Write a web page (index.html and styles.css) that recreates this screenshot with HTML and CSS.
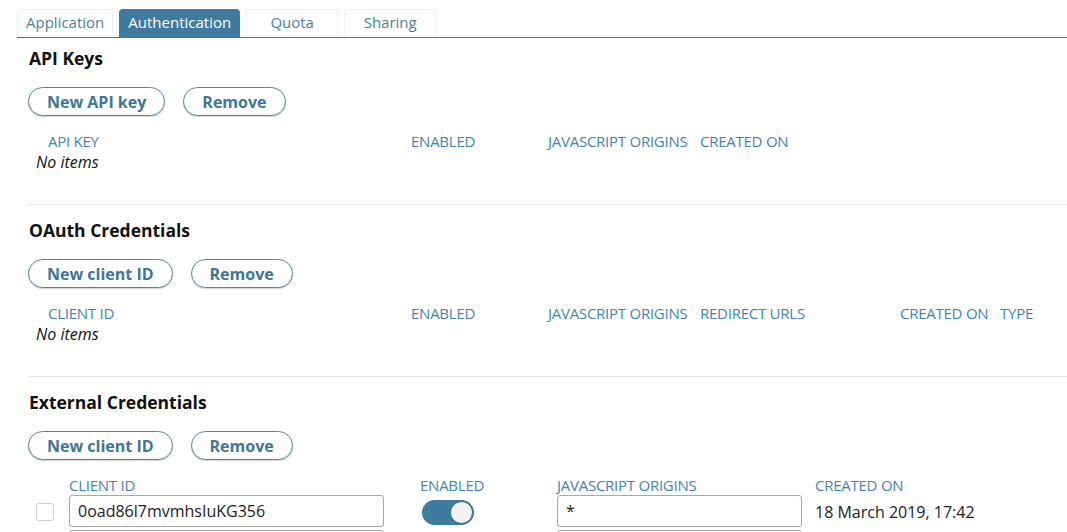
FILE: index.html
```html
<!DOCTYPE html>
<html>
<head>
<meta charset="utf-8">
<link rel="stylesheet" href="styles.css">
</head>
<body>
<div class="page">
  <nav class="tabs">
    <div class="tab">Application</div>
    <div class="tab active">Authentication</div>
    <div class="tab">Quota</div>
    <div class="tab">Sharing</div>
  </nav>

  <section class="section first">
    <h2 class="title">API Keys</h2>
    <div class="actions">
      <button class="pill">New API key</button>
      <button class="pill">Remove</button>
    </div>
    <div class="grid grid-api">
      <div class="th">API KEY</div>
      <div class="th">ENABLED</div>
      <div class="th">JAVASCRIPT ORIGINS</div>
      <div class="th">CREATED ON</div>
    </div>
    <div class="empty">No items</div>
  </section>

  <section class="section">
    <h2 class="title">OAuth Credentials</h2>
    <div class="actions">
      <button class="pill">New client ID</button>
      <button class="pill">Remove</button>
    </div>
    <div class="grid grid-oauth">
      <div class="th">CLIENT ID</div>
      <div class="th">ENABLED</div>
      <div class="th">JAVASCRIPT ORIGINS</div>
      <div class="th">REDIRECT URLS</div>
      <div class="th">CREATED ON</div>
      <div class="th">TYPE</div>
    </div>
    <div class="empty">No items</div>
  </section>

  <section class="section last">
    <h2 class="title">External Credentials</h2>
    <div class="actions">
      <button class="pill">New client ID</button>
      <button class="pill">Remove</button>
    </div>
    <div class="grid grid-ext">
      <div class="th"></div>
      <div class="th">CLIENT ID</div>
      <div class="th">ENABLED</div>
      <div class="th">JAVASCRIPT ORIGINS</div>
      <div class="th">CREATED ON</div>

      <div class="td"><span class="check"></span></div>
      <div class="td"><input class="field wide" value="0oad86l7mvmhsIuKG356"></div>
      <div class="td"><span class="toggle"><span class="knob"></span></span></div>
      <div class="td"><input class="field origin" value="*"></div>
      <div class="td text">18 March 2019, 17:42</div>

      <div class="td"></div>
      <div class="td"><input class="field wide" value=""></div>
      <div class="td"></div>
      <div class="td"><input class="field origin" value=""></div>
      <div class="td"></div>
    </div>
  </section>
</div>
</body>
</html>
```

FILE: styles.css
```css
* { box-sizing: border-box; }
html, body { margin: 0; padding: 0; background: #fff; }
body {
  font-family: "Open Sans", "Liberation Sans", sans-serif;
  color: #222;
  overflow: hidden;
  height: 532px;
}
.page { padding: 9px 0 0 17px; height: 532px; overflow: hidden; }

.tabs {
  display: flex;
  gap: 6px;
  border-bottom: 1px solid #3f7b9e;
  height: 29px;
}
.tab {
  min-width: 92px;
  height: 28px;
  padding: 0 8px;
  border: 1px solid #f0f0f0;
  border-bottom: none;
  border-radius: 4px 4px 0 0;
  font-size: 15px;
  line-height: 25px;
  text-align: center;
  color: #4a7fa3;
}
.tab.active {
  background: #3f7b9e;
  border-color: #3f7b9e;
  color: #fff;
}

.section {
  margin-left: 11px;
  padding-top: 13px;
  padding-bottom: 31px;
  border-bottom: 1px solid #e8e8e8;
}
.section.first { padding-top: 8px; }
.section.last { border-bottom: none; }

.title {
  margin: 0 0 0 1px;
  font-size: 17.5px;
  font-weight: 700;
  line-height: 24px;
  color: #111;
}

.actions {
  display: flex;
  gap: 18px;
  margin-top: 17px;
}
.pill {
  height: 29px;
  padding: 0 18px;
  border: 1px solid #55869f;
  border-radius: 15px;
  background: #fff;
  font-family: "Open Sans", "Liberation Sans", sans-serif;
  font-size: 16px;
  font-weight: 700;
  color: #3f7696;
  box-shadow: 0 1px 1px rgba(0,0,0,0.18);
}

.grid {
  display: grid;
  margin-top: 15px;
  margin-left: 8px;
}
.grid-api { grid-template-columns: 363px 137px 152px 1fr; }
.grid-oauth { grid-template-columns: 363px 137px 152px 200px 100px 1fr; }
.grid-ext { grid-template-columns: 21px 351px 137px 258px 1fr; }

.th {
  padding-left: 12px;
  font-size: 15px;
  line-height: 20px;
  letter-spacing: -0.25px;
  color: #4384b6;
  white-space: nowrap;
}
.grid-ext .th:first-child { padding-left: 0; }

.empty {
  margin-left: 8px;
  font-size: 16px;
  font-style: italic;
  line-height: 22px;
  color: #111;
}

.grid-ext .td {
  height: 35px;
  padding-left: 12px;
  display: flex;
  align-items: flex-start;
}
.grid-ext .td:nth-child(5n+1) { padding-left: 0; padding-top: 8px; }

.check {
  display: block;
  width: 18px;
  height: 18px;
  border: 1px solid #cfcfcf;
  border-radius: 3px;
  background: #fff;
}
.field {
  height: 32px;
  border: 1px solid #a8a8a8;
  border-radius: 3px;
  padding: 0 8px;
  font-family: "Open Sans", "Liberation Sans", sans-serif;
  font-size: 16px;
  color: #222;
  background: #fff;
  outline: none;
}
.field.wide { width: 315px; }
.field.origin { width: 245px; }

.toggle {
  position: relative;
  display: block;
  width: 52px;
  height: 25px;
  margin-top: 5px;
  margin-left: 2px;
  border-radius: 13px;
  background: #3f7b9e;
}
.knob {
  position: absolute;
  right: 2px;
  top: 2px;
  width: 21px;
  height: 21px;
  border-radius: 50%;
  background: #f4f4f4;
  box-shadow: 0 0 1px rgba(0,0,0,0.4);
}

.td.text {
  padding-top: 6px;
  font-size: 16px;
  color: #222;
  line-height: 22px;
}
```
